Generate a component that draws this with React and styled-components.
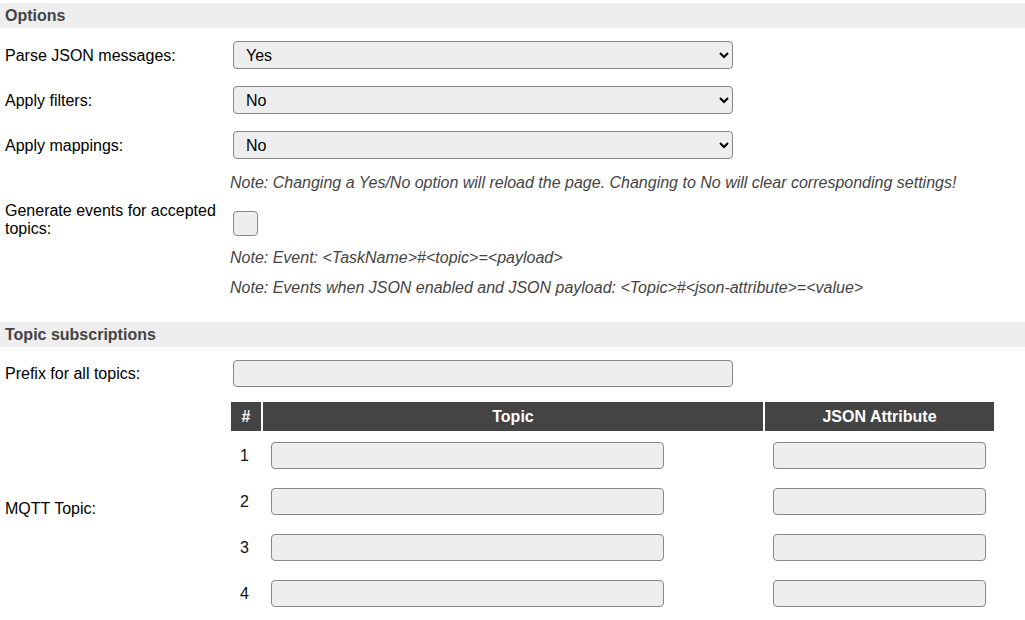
import React from 'react';
import styled, {createGlobalStyle} from 'styled-components';

const GlobalStyle = createGlobalStyle`
	body {
		margin: 0;
		background: #fff;
		font-family: "Liberation Sans", Arial, sans-serif;
		font-size: 16px;
		color: #000;
	}
`;

const Page = styled.div`
	width: 1025px;
`;

const SectionHeader = styled.div`
	margin-top: ${props => props.top || 3}px;
	height: 25px;
	line-height: 25px;
	padding-left: 5px;
	background: #eee;
	color: #444;
	font-weight: bold;
	font-size: 16px;
`;

const Row = styled.div`
	display: grid;
	grid-template-columns: ${props => props.labelWidth || 233}px 1fr;
	align-items: ${props => props.align || 'center'};
	padding-top: ${props => props.pt || 0}px;
	padding-bottom: ${props => props.pb || 0}px;
`;

const Label = styled.div`
	padding-left: 5px;
	padding-right: 8px;
	padding-top: 1px;
	line-height: 18px;
`;

const Select = styled.select`
	width: 500px;
	height: 28px;
	padding: 0 8px;
	font-family: "Liberation Sans", Arial, sans-serif;
	font-size: 16px;
	color: #000;
	background-color: #eee;
	border: 1px solid #888;
	border-radius: 4px;
`;

const TextInput = styled.input`
	box-sizing: border-box;
	width: ${props => props.w ? props.w + 'px' : '100%'};
	height: 27px;
	padding: 0 8px;
	font-family: "Liberation Sans", Arial, sans-serif;
	font-size: 16px;
	background: #eee;
	border: 1px solid #888;
	border-radius: 4px;
`;

const Checkbox = styled.input.attrs({type: 'checkbox'})`
	appearance: none;
	box-sizing: border-box;
	display: block;
	margin: 10px 0 0 0;
	width: 25px;
	height: 25px;
	background: #eee;
	border: 1px solid #888;
	border-radius: 4px;
`;

const Note = styled.div`
	line-height: 20px;
	font-style: italic;
	color: #444;
`;

const Table = styled.div`
	display: grid;
	grid-template-columns: 30px 500px 229px;
	column-gap: 2px;
`;

const HeadCell = styled.div`
	height: 29px;
	line-height: 29px;
	background: #444;
	color: #fff;
	font-weight: bold;
	text-align: center;
`;

const NumCell = styled.div`
	height: 46px;
	padding: 11px 3px 0 0;
	box-sizing: border-box;
	line-height: 27px;
	text-align: center;
	color: #111;
`;

const InputCell = styled.div`
	height: 46px;
	padding: 11px 8px 0 8px;
	box-sizing: border-box;
`;

const options = [
	{label: 'Parse JSON messages:', value: 'Yes'},
	{label: 'Apply filters:', value: 'No'},
	{label: 'Apply mappings:', value: 'No'},
];

export default function App(){
	return(
		<Page>
			<GlobalStyle/>
			<SectionHeader>Options</SectionHeader>
			{options.map(o =>
				<Row key={o.label} pt={13} pb={4}>
					<Label>{o.label}</Label>
					<div>
						<Select defaultValue={o.value}>
							<option>Yes</option>
							<option>No</option>
						</Select>
					</div>
				</Row>
			)}
			<Row labelWidth={230} pt={10}>
				<div/>
				<Note>Note: Changing a Yes/No option will reload the page. Changing to No will clear corresponding settings!</Note>
			</Row>
			<Row pt={8} align="start">
				<Label>Generate events for accepted topics:</Label>
				<div><Checkbox/></div>
			</Row>
			<Row labelWidth={230} pt={10}>
				<div/>
				<Note>Note: Event: &lt;TaskName&gt;#&lt;topic&gt;=&lt;payload&gt;</Note>
			</Row>
			<Row labelWidth={230} pt={10}>
				<div/>
				<Note>Note: Events when JSON enabled and JSON payload: &lt;Topic&gt;#&lt;json-attribute&gt;=&lt;value&gt;</Note>
			</Row>

			<SectionHeader top={24}>Topic subscriptions</SectionHeader>
			<Row pt={13} pb={15}>
				<Label>Prefix for all topics:</Label>
				<div><TextInput w={500}/></div>
			</Row>
			<Row labelWidth={231}>
				<Label>MQTT Topic:</Label>
				<Table>
					<HeadCell>#</HeadCell>
					<HeadCell>Topic</HeadCell>
					<HeadCell>JSON Attribute</HeadCell>
					{[1,2,3,4].map(n =>
						<React.Fragment key={n}>
							<NumCell>{n}</NumCell>
							<InputCell><TextInput w={393}/></InputCell>
							<InputCell><TextInput/></InputCell>
						</React.Fragment>
					)}
				</Table>
			</Row>
		</Page>
	);
}
